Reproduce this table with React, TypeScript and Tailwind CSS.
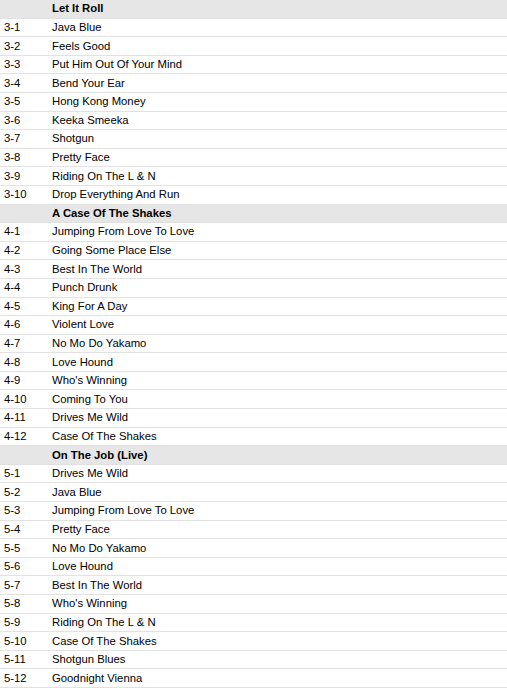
const discs: { title: string; disc: number; tracks: string[] }[] = [
  {
    title: 'Let It Roll',
    disc: 3,
    tracks: [
      'Java Blue',
      'Feels Good',
      'Put Him Out Of Your Mind',
      'Bend Your Ear',
      'Hong Kong Money',
      'Keeka Smeeka',
      'Shotgun',
      'Pretty Face',
      'Riding On The L & N',
      'Drop Everything And Run',
    ],
  },
  {
    title: 'A Case Of The Shakes',
    disc: 4,
    tracks: [
      'Jumping From Love To Love',
      'Going Some Place Else',
      'Best In The World',
      'Punch Drunk',
      'King For A Day',
      'Violent Love',
      'No Mo Do Yakamo',
      'Love Hound',
      "Who's Winning",
      'Coming To You',
      'Drives Me Wild',
      'Case Of The Shakes',
    ],
  },
  {
    title: 'On The Job (Live)',
    disc: 5,
    tracks: [
      'Drives Me Wild',
      'Java Blue',
      'Jumping From Love To Love',
      'Pretty Face',
      'No Mo Do Yakamo',
      'Love Hound',
      'Best In The World',
      "Who's Winning",
      'Riding On The L & N',
      'Case Of The Shakes',
      'Shotgun Blues',
      'Goodnight Vienna',
    ],
  },
]

export default function App() {
  return (
    <div className="w-[507px] h-[695px] bg-white text-[11.3px] text-black font-['Liberation_Sans',Arial,sans-serif] overflow-hidden">
      {discs.map(d => (
        <div key={d.title}>
          <div className="flex items-center h-[18.6px] bg-[#e6e6e6] border-b border-[#e0e0e0]">
            <div className="w-[52px]" />
            <div className="font-bold">{d.title}</div>
          </div>
          {d.tracks.map((t, i) => (
            <div key={i} className="flex items-center h-[18.6px] border-b border-[#e2e2e2]">
              <div className="w-[52px] pl-[4px]">{d.disc}-{i + 1}</div>
              <div>{t}</div>
            </div>
          ))}
        </div>
      ))}
    </div>
  )
}
